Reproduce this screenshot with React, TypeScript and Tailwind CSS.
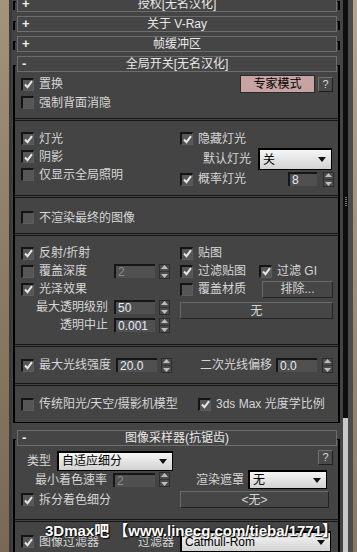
import React from "react";

const label = "text-[12px] leading-[14px] text-[#d6d6d6] whitespace-nowrap";

function Check({ on }: { on?: boolean }) {
  return (
    <span className="flex h-[13px] w-[13px] shrink-0 items-center justify-center border-t-2 border-l-2 border-b border-r border-t-[#141414] border-l-[#141414] border-b-[#5c5c5c] border-r-[#5c5c5c] bg-[#565656]">
      {on && (
        <svg width="9" height="9" viewBox="0 0 9 9">
          <path d="M1 4.5 L3.5 7.2 L8 1.2" stroke="#e6e6e6" strokeWidth="2" fill="none" />
        </svg>
      )}
    </span>
  );
}

function CheckRow({ on, text, className = "" }: { on?: boolean; text: string; className?: string }) {
  return (
    <div className={`flex items-center ${className}`}>
      <Check on={on} />
      <span className={`ml-[5px] ${label}`}>{text}</span>
    </div>
  );
}

function Arrows() {
  return (
    <div className="flex h-[15px] w-[11px] shrink-0 flex-col items-center justify-center gap-[2px] border border-[#2c2c2c] bg-[#4b4b4b]">
      <svg width="7" height="4" viewBox="0 0 7 4">
        <path d="M0 4 L3.5 0 L7 4 Z" fill="#bdbdbd" />
      </svg>
      <div className="h-px w-[9px] bg-[#333]" />
      <svg width="7" height="4" viewBox="0 0 7 4">
        <path d="M0 0 L3.5 4 L7 0 Z" fill="#bdbdbd" />
      </svg>
    </div>
  );
}

function Spin({ value, w, gap, dim }: { value: string; w: string; gap: string; dim?: boolean }) {
  return (
    <div className={`flex items-center ${gap}`}>
      <div
        className={`flex h-[14px] ${w} items-center border-t-2 border-l-2 border-[#161616] bg-[#505050] pl-[2px] text-[12px] leading-[12px] ${dim ? "text-[#8c8c8c]" : "text-[#e4ecf8]"}`}
      >
        {value}
      </div>
      <Arrows />
    </div>
  );
}

function Drop({ value, w, h }: { value: string; w: string; h: string }) {
  return (
    <div className={`flex ${w} ${h} shrink-0 items-center justify-between border-t-2 border-l-2 border-b border-r border-black bg-gradient-to-b from-[#f6f6f6] to-[#d2d2d2] pl-[3px] pr-[5px]`}>
      <span className="text-[12px] leading-[14px] text-black whitespace-nowrap">{value}</span>
      <svg width="8" height="5" viewBox="0 0 8 5">
        <path d="M0 0 L8 0 L4 5 Z" fill="#111" />
      </svg>
    </div>
  );
}

function Btn({ text, w, h }: { text: string; w: string; h: string }) {
  return (
    <div className={`flex ${w} ${h} shrink-0 items-center justify-center border border-t-[#6a6a6a] border-l-[#6a6a6a] border-b-[#222] border-r-[#222] bg-[#464646] text-[12px] leading-[14px] text-[#d4d4d4]`}>
      {text}
    </div>
  );
}

function Help({ className = "" }: { className?: string }) {
  return (
    <div className={`flex h-[15px] w-[15px] shrink-0 items-center justify-center border border-t-[#707070] border-l-[#707070] border-b-[#1e1e1e] border-r-[#1e1e1e] bg-[#4a4a4a] text-[11px] text-[#d8d8d8] ${className}`}>
      ?
    </div>
  );
}

function Head({ title, open }: { title: string; open?: boolean }) {
  return (
    <div className="flex h-[16px] shrink-0">
      <div className="w-[5px] shrink-0 pl-[1px]">
        <div className={open ? "mt-[9px] h-[7px] w-[3px] border-l-2 border-t border-black" : "mt-[5px] h-[9px] w-[3px] border-l-2 border-t border-black"} />
      </div>
      <div className="relative flex w-[320px] items-center justify-center border border-[#6d6d6d] bg-[#454545]">
        <span className="absolute left-[4px] top-[-1px] text-[13px] font-bold leading-[16px] text-[#eeeeee]">{open ? "-" : "+"}</span>
        <span className="text-[12px] leading-[14px] text-[#e8e8e8]">{title}</span>
      </div>
      <div className="w-[6px] shrink-0">
        <div className={open ? "mt-[9px] h-[7px] w-[3px] border-r-2 border-t border-black" : "mt-[5px] h-[9px] w-[3px] border-r-2 border-t border-black"} />
      </div>
    </div>
  );
}

function Sep() {
  return <div className="h-[3px] shrink-0 border-y border-[#161616]" />;
}

export default function App() {
  return (
    <div className="relative flex h-[552px] w-[357px] overflow-hidden font-['Liberation_Sans','Noto_Sans_CJK_SC',sans-serif]">
      <div className="w-[9px] shrink-0 bg-gradient-to-b from-[#a3927d] via-[#8d7a64] to-[#7a6856]" />
      <div className="w-[3px] shrink-0 bg-[#3a3a3a]" />

      <div className="flex w-[331px] shrink-0 flex-col bg-[#444444]">
        <div className="-mt-[4px] flex flex-col gap-[4px]">
          <Head title="授权[无名汉化]" />
          <Head title="关于 V-Ray" />
          <Head title="帧缓冲区" />
        </div>

        <div className="mt-[4px]">
          <Head title="全局开关[无名汉化]" open />
          <div className="ml-[1px] w-[327px] border-l-2 border-r-2 border-b border-black">
            {/* section 1 */}
            <div className="h-[46px] pl-[6px] pr-[5px] pt-[3px]">
              <div className="flex h-[18px] items-center">
                <CheckRow on text="置换" />
                <div className="ml-auto flex items-center gap-[3px]">
                  <div className="flex h-[18px] w-[75px] items-center justify-center border border-[#2a2a2a] bg-[#c7a3a3] text-[12px] leading-[14px] text-black">
                    专家模式
                  </div>
                  <Help />
                </div>
              </div>
              <CheckRow text="强制背面消隐" className="mt-[3px] h-[13px]" />
            </div>
            <Sep />

            {/* section 2 */}
            <div className="flex h-[74px] pl-[6px] pr-[4px] pt-[11px]">
              <div className="flex w-[159px] flex-col gap-[5px]">
                <CheckRow on text="灯光" className="h-[13px]" />
                <CheckRow on text="阴影" className="h-[13px]" />
                <CheckRow text="仅显示全局照明" className="h-[13px]" />
              </div>
              <div className="flex flex-1 flex-col">
                <CheckRow on text="隐藏灯光" className="h-[13px]" />
                <div className="mt-[3px] flex h-[22px] items-center">
                  <span className={`w-[71px] text-right ${label}`}>默认灯光</span>
                  <div className="ml-[7px]">
                    <Drop value="关" w="w-[74px]" h="h-[22px]" />
                  </div>
                </div>
                <div className="mt-[2px] flex h-[14px] items-center">
                  <CheckRow on text="概率灯光" />
                  <div className="ml-auto">
                    <Spin value="8" w="w-[29px]" gap="gap-[6px]" />
                  </div>
                </div>
              </div>
            </div>
            <Sep />

            {/* section 3 */}
            <div className="h-[35px] pl-[6px] pt-[13px]">
              <CheckRow text="不渲染最终的图像" className="h-[13px]" />
            </div>
            <Sep />

            {/* section 4 */}
            <div className="flex h-[108px] pl-[6px] pr-[5px] pt-[8px]">
              <div className="flex w-[159px] flex-col">
                <CheckRow on text="反射/折射" className="h-[18px]" />
                <div className="flex h-[18px] items-center">
                  <CheckRow text="覆盖深度" className="w-[93px]" />
                  <Spin value="2" w="w-[41px]" gap="gap-[4px]" dim />
                </div>
                <CheckRow on text="光泽效果" className="h-[18px]" />
                <div className="flex h-[18px] items-center">
                  <span className={`w-[87px] text-right ${label}`}>最大透明级别</span>
                  <div className="ml-[6px]">
                    <Spin value="50" w="w-[41px]" gap="gap-[4px]" />
                  </div>
                </div>
                <div className="flex h-[18px] items-center">
                  <span className={`w-[87px] text-right ${label}`}>透明中止</span>
                  <div className="ml-[6px]">
                    <Spin value="0.001" w="w-[41px]" gap="gap-[4px]" />
                  </div>
                </div>
              </div>
              <div className="flex flex-1 flex-col">
                <CheckRow on text="贴图" className="h-[18px]" />
                <div className="flex h-[18px] items-center">
                  <CheckRow on text="过滤贴图" className="w-[79px]" />
                  <CheckRow on text="过滤 GI" />
                </div>
                <div className="flex h-[18px] items-center">
                  <CheckRow text="覆盖材质" />
                  <div className="ml-auto">
                    <Btn text="排除..." w="w-[71px]" h="h-[17px]" />
                  </div>
                </div>
                <div className="mt-[4px]">
                  <Btn text="无" w="w-[153px]" h="h-[17px]" />
                </div>
              </div>
            </div>
            <Sep />

            {/* section 5 */}
            <div className="flex h-[36px] items-center pl-[6px] pr-[5px]">
              <CheckRow on text="最大光线强度" />
              <div className="ml-[5px]">
                <Spin value="20.0" w="w-[41px]" gap="gap-[4px]" />
              </div>
              <div className="ml-auto flex items-center">
                <span className={label}>二次光线偏移</span>
                <div className="ml-[4px]">
                  <Spin value="0.0" w="w-[41px]" gap="gap-[5px]" />
                </div>
              </div>
            </div>
            <Sep />

            {/* section 6 */}
            <div className="flex h-[36px] items-center pl-[6px]">
              <CheckRow text="传统阳光/天空/摄影机模型" className="w-[177px]" />
              <CheckRow on text="3ds Max 光度学比例" />
            </div>
          </div>
        </div>

        <div className="mt-[7px] flex flex-1 flex-col">
          <Head title="图像采样器(抗锯齿)" open />
          <div className="ml-[1px] flex w-[327px] flex-1 flex-col border-l-2 border-r-2 border-black">
            <div className="mt-[5px] flex h-[19px] items-center pl-[12px] pr-[5px]">
              <span className={`w-[30px] ${label}`}>类型</span>
              <Drop value="自适应细分" w="w-[116px]" h="h-[20px]" />
              <Help className="ml-auto self-start -mt-[1px]" />
            </div>
            <div className="flex h-[19px] items-center pl-[20px]">
              <span className={label}>最小着色速率</span>
              <div className="ml-[6px]">
                <Spin value="2" w="w-[42px]" gap="gap-[4px]" dim />
              </div>
              <span className={`ml-[26px] w-[52px] ${label}`}>渲染遮罩</span>
              <Drop value="无" w="w-[79px]" h="h-[19px]" />
            </div>
            <div className="mt-[2px] flex h-[17px] items-center pl-[6px]">
              <CheckRow on text="拆分着色细分" className="w-[159px]" />
              <Btn text="<无>" w="w-[149px]" h="h-[17px]" />
            </div>
            <div className="mt-[11px]">
              <Sep />
            </div>
            <div className="mt-[9px] flex h-[21px] items-center pl-[6px]">
              <CheckRow on text="图像过滤器" className="w-[117px]" />
              <span className={`w-[42px] ${label}`}>过滤器</span>
              <Drop value="Catmull-Rom" w="w-[151px]" h="h-[21px]" />
            </div>
          </div>
        </div>
      </div>

      <div className="flex w-[5px] shrink-0 flex-col">
        <div className="flex h-[418px] flex-col items-center justify-center gap-[1px] bg-[#0e0e0e] pb-[16px]">
          <div className="h-px w-[2px] bg-[#777]" />
          <div className="h-px w-[2px] bg-[#777]" />
          <div className="h-px w-[2px] bg-[#777]" />
          <div className="h-px w-[2px] bg-[#777]" />
          <div className="h-px w-[2px] bg-[#777]" />
        </div>
        <div className="flex-1 bg-[#c9c9c9]" />
      </div>
      <div className="w-[5px] shrink-0 bg-[#4b4b4b]" />
      <div className="w-[4px] shrink-0 bg-gradient-to-b from-[#b3a491] to-[#8a7763]" />

      <div className="absolute left-[45px] top-[522px] whitespace-nowrap text-[15px] font-bold leading-[18px] text-white [text-shadow:0_0_2px_#000,1px_1px_1px_#000]">
        3Dmax吧 【www.linecg.com/tieba/1771】
      </div>
    </div>
  );
}
